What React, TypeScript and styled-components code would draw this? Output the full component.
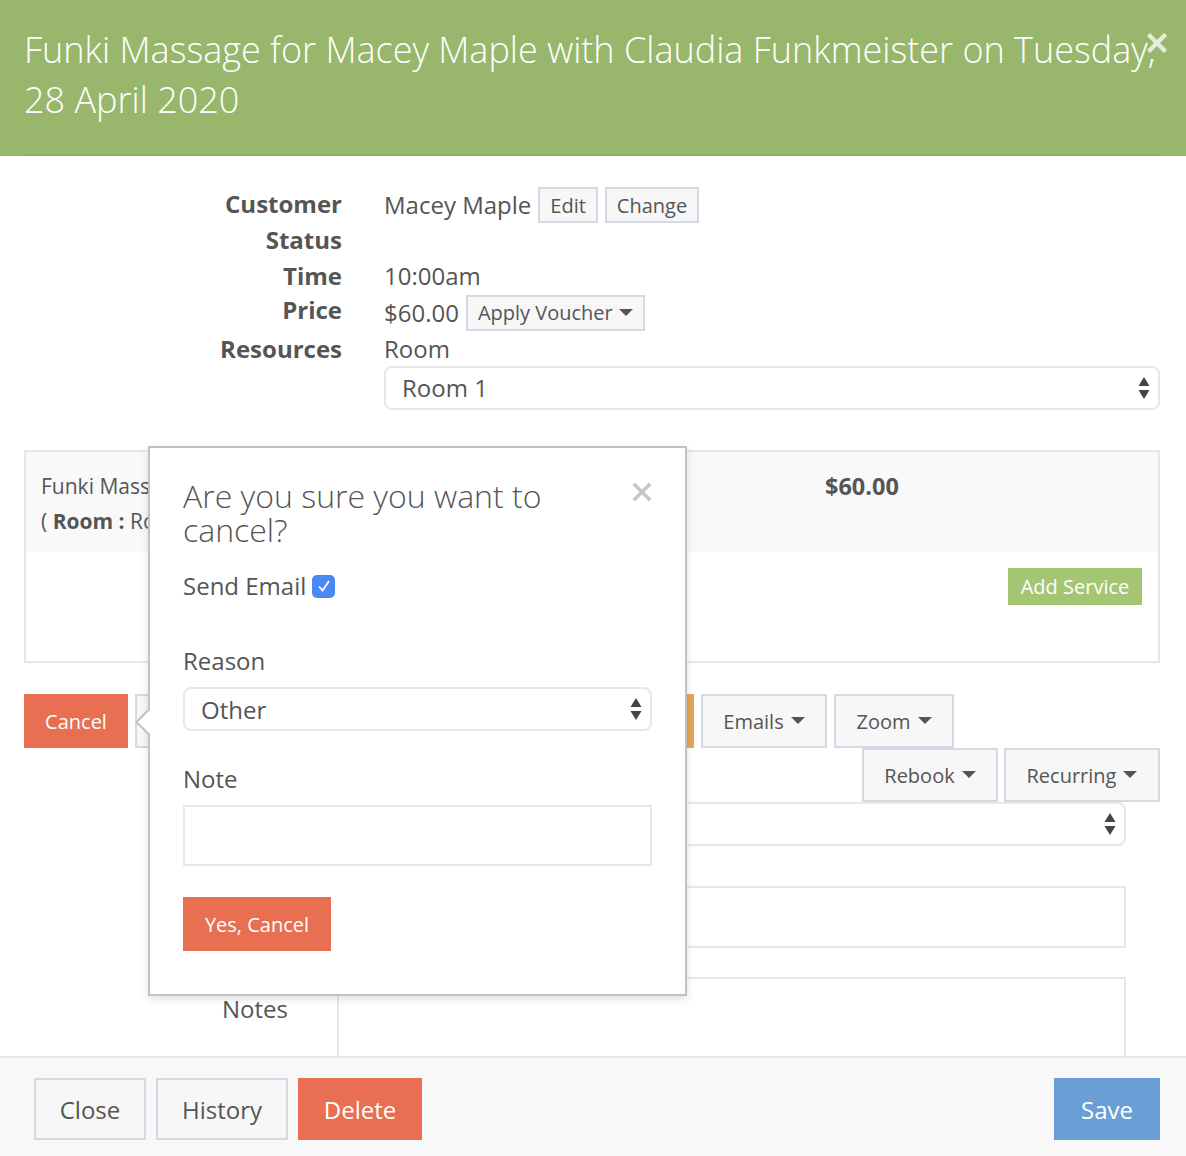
import React from "react";
import styled, { createGlobalStyle } from "styled-components";

const GlobalStyle = createGlobalStyle`
  html, body { margin: 0; padding: 0; background: #fff; }
  body { font-family: "Open Sans", "Noto Sans", sans-serif; color: #555; }
  * { box-sizing: border-box; }
`;

const Modal = styled.div`
  width: 1186px;
  height: 1156px;
  display: flex;
  flex-direction: column;
  overflow: hidden;
  position: relative;
`;

const Header = styled.header`
  position: relative;
  background: #98b76c;
  padding: 25px 26px 0 24px;
  flex: 0 0 156px;
`;

const Title = styled.h1`
  margin: 0;
  font-weight: 300;
  font-size: 36px;
  line-height: 50px;
  color: #fff;
  padding-bottom: 4px;
  border-bottom: 2px solid #8fae63;
  height: 131px;
`;

const HeaderClose = styled.button`
  position: absolute;
  top: 33px;
  right: 19px;
  width: 20px;
  height: 20px;
  padding: 0;
  border: 0;
  background: transparent;
  display: flex;
`;

const Body = styled.main`
  position: relative;
  flex: 1 1 auto;
  overflow: hidden;
  padding: 31px 26px 0 24px;
`;

const Details = styled.section`
  display: flex;
  flex-direction: column;
`;

const DetailRow = styled.div<{ $h: number }>`
  display: grid;
  grid-template-columns: 318px 1fr;
  column-gap: 42px;
  align-items: center;
  min-height: ${(p) => p.$h}px;
`;

const Label = styled.div`
  text-align: right;
  font-weight: 700;
  font-size: 24px;
  line-height: 34px;
  color: #555;
  align-self: start;
`;

const Value = styled.div`
  display: flex;
  align-items: center;
  gap: 7px;
  font-size: 24px;
  line-height: 34px;
  color: #555;
`;

const ValueStack = styled.div`
  display: flex;
  flex-direction: column;
  font-size: 24px;
  line-height: 34px;
  color: #555;
`;

const SmallBtn = styled.button`
  font-family: "Open Sans", sans-serif;
  font-size: 20px;
  color: #555;
  background: #f7f7f7;
  border: 2px solid #d3dae5;
  height: 36px;
  padding: 0 10px;
  display: inline-flex;
  align-items: center;
  gap: 6px;
`;

const SelectBox = styled.div<{ $w?: string }>`
  position: relative;
  height: 44px;
  width: ${(p) => p.$w || "100%"};
  border: 2px solid #e8e8e8;
  border-radius: 8px;
  background: #fff;
  display: flex;
  align-items: center;
  justify-content: space-between;
  padding: 0 8px 0 16px;
  font-size: 24px;
  color: #555;
`;

const ServiceBox = styled.section`
  margin-top: 40px;
  border: 2px solid #e6e6e6;
  height: 213px;
  display: flex;
  flex-direction: column;
`;

const ServiceRow = styled.div`
  background: #f9f9f9;
  height: 100px;
  display: grid;
  grid-template-columns: 784px 1fr;
  padding: 17px 15px 0;
  font-size: 21px;
  line-height: 35px;
  color: #555;
`;

const ServiceName = styled.div`
  display: flex;
  flex-direction: column;
`;

const ServicePrice = styled.div`
  font-weight: 700;
  font-size: 23.5px;
`;

const ServiceFoot = styled.div`
  display: flex;
  justify-content: flex-end;
  padding: 16px 16px 0;
`;

const Btn = styled.button<{ $variant?: "default" | "danger" | "warn" | "success" | "primary"; $h?: number; $fs?: number; $w?: number }>`
  font-family: "Open Sans", sans-serif;
  font-size: ${(p) => p.$fs || 20}px;
  height: ${(p) => p.$h || 54}px;
  ${(p) => (p.$w ? `width: ${p.$w}px;` : "")}
  padding: 0;
  display: inline-flex;
  align-items: center;
  justify-content: center;
  gap: 7px;
  border-radius: 0;
  white-space: nowrap;
  ${(p) => {
    switch (p.$variant) {
      case "danger":
        return "background:#e86f51;color:#fff;border:0;";
      case "warn":
        return "background:#e4a853;color:#fff;border:0;";
      case "success":
        return "background:#a4c572;color:#fff;border:0;";
      case "primary":
        return "background:#6a9fd6;color:#fff;border:0;";
      default:
        return "background:#f7f7f7;color:#555;border:2px solid #d3dae5;";
    }
  }}
`;

const Toolbar = styled.div`
  margin-top: 31px;
  display: flex;
  gap: 7px;
`;

const ToolbarRight = styled.div`
  display: flex;
  justify-content: flex-end;
  gap: 6px;
`;

const FormRows = styled.section`
  display: flex;
  flex-direction: column;
  padding-right: 34px;
`;

const FormRow = styled.div<{ $mt: number }>`
  display: grid;
  grid-template-columns: 264px 1fr;
  column-gap: 49px;
  margin-top: ${(p) => p.$mt}px;
`;

const FormLabel = styled.div`
  text-align: right;
  font-size: 24px;
  line-height: 34px;
  padding-top: 15px;
  color: #555;
`;

const TextBox = styled.div<{ $h: number }>`
  height: ${(p) => p.$h}px;
  border: 2px solid #e8e8e8;
  background: #fff;
`;

const Footer = styled.footer`
  flex: 0 0 100px;
  background: #f8f8f8;
  border-top: 2px solid #e9e9e9;
  padding: 20px 26px 0 34px;
  display: flex;
  justify-content: space-between;
  align-items: flex-start;
`;

const FooterGroup = styled.div`
  display: flex;
  gap: 10px;
`;

const Popover = styled.div`
  position: absolute;
  left: 148px;
  top: 290px;
  width: 539px;
  height: 550px;
  background: #fff;
  border: 2px solid #c2c2c2;
  box-shadow: 0 3px 8px rgba(0, 0, 0, 0.12);
  padding: 31px 33px 0 33px;
  display: flex;
  flex-direction: column;
  z-index: 5;

  &::before,
  &::after {
    content: "";
    position: absolute;
    top: 50%;
    width: 0;
    height: 0;
    border-style: solid;
    border-color: transparent;
  }
  &::before {
    left: -15px;
    margin-top: 1px;
    transform: translateY(-50%);
    border-width: 14px 14px 14px 0;
    border-right-color: #c2c2c2;
  }
  &::after {
    left: -12px;
    margin-top: 1px;
    transform: translateY(-50%);
    border-width: 13px 13px 13px 0;
    border-right-color: #fff;
  }
`;

const PopTitle = styled.h3`
  margin: 0;
  font-weight: 300;
  font-size: 32px;
  line-height: 34px;
  color: #555;
  padding-right: 90px;
`;

const PopClose = styled.button`
  position: absolute;
  top: 34px;
  right: 33px;
  width: 20px;
  height: 20px;
  padding: 0;
  border: 0;
  background: transparent;
  display: flex;
`;

const CheckRow = styled.label`
  margin-top: 22px;
  display: flex;
  align-items: center;
  gap: 6px;
  font-size: 24px;
  line-height: 34px;
  color: #555;
`;

const CheckBox = styled.span`
  width: 23px;
  height: 23px;
  border-radius: 5px;
  background: #4a89f3;
  display: inline-flex;
  align-items: center;
  justify-content: center;
`;

const PopLabel = styled.div<{ $mt: number }>`
  margin-top: ${(p) => p.$mt}px;
  margin-bottom: 9px;
  font-size: 24px;
  line-height: 34px;
  color: #555;
`;

const PopActions = styled.div`
  margin-top: 31px;
  display: flex;
`;

const Caret = () => (
  <svg width="14" height="8" viewBox="0 0 14 8">
    <path d="M0 0 H14 L7 7 Z" fill="#555" />
  </svg>
);

const Updown = () => (
  <svg width="12" height="24" viewBox="0 0 12 24">
    <path d="M6 1 L11.5 10 H0.5 Z" fill="#444" />
    <path d="M0.5 14 H11.5 L6 23 Z" fill="#444" />
  </svg>
);

const XIcon = ({ color, w }: { color: string; w: number }) => (
  <svg width="20" height="20" viewBox="0 0 20 20">
    <path d="M3 3 L17 17 M17 3 L3 17" stroke={color} strokeWidth={w} strokeLinecap="square" />
  </svg>
);

export default function App() {
  return (
    <>
      <GlobalStyle />
      <Modal>
        <Header>
          <Title>Funki Massage for Macey Maple with Claudia Funkmeister on Tuesday, 28 April 2020</Title>
          <HeaderClose aria-label="Close">
            <XIcon color="#e6ecdd" w={4.4} />
          </HeaderClose>
        </Header>

        <Body>
          <Details>
            <DetailRow $h={36}>
              <Label>Customer</Label>
              <Value>
                Macey Maple
                <SmallBtn>Edit</SmallBtn>
                <SmallBtn>Change</SmallBtn>
              </Value>
            </DetailRow>
            <DetailRow $h={36}>
              <Label>Status</Label>
              <Value />
            </DetailRow>
            <DetailRow $h={34}>
              <Label>Time</Label>
              <Value>10:00am</Value>
            </DetailRow>
            <DetailRow $h={39}>
              <Label>Price</Label>
              <Value>
                $60.00
                <SmallBtn>
                  Apply Voucher <Caret />
                </SmallBtn>
              </Value>
            </DetailRow>
            <DetailRow $h={78}>
              <Label>Resources</Label>
              <ValueStack>
                Room
                <SelectBox>
                  Room 1
                  <Updown />
                </SelectBox>
              </ValueStack>
            </DetailRow>
          </Details>

          <ServiceBox>
            <ServiceRow>
              <ServiceName>
                <span>Funki Massage (60 min)</span>
                <span>
                  ( <b>Room :</b> Room 1 )
                </span>
              </ServiceName>
              <ServicePrice>$60.00</ServicePrice>
            </ServiceRow>
            <ServiceFoot>
              <Btn $variant="success" $h={37} $w={134}>
                Add Service
              </Btn>
            </ServiceFoot>
          </ServiceBox>

          <Toolbar>
            <Btn $variant="danger" $w={104}>Cancel</Btn>
            <Btn $w={164}>No Show</Btn>
            <Btn $variant="warn" $w={388}>Check In</Btn>
            <Btn $w={126}>
              Emails <Caret />
            </Btn>
            <Btn $w={120}>
              Zoom <Caret />
            </Btn>
          </Toolbar>
          <ToolbarRight>
            <Btn $w={136}>
              Rebook <Caret />
            </Btn>
            <Btn $w={156}>
              Recurring <Caret />
            </Btn>
          </ToolbarRight>

          <FormRows>
            <FormRow $mt={0}>
              <FormLabel>Status</FormLabel>
              <SelectBox>
                <span />
                <Updown />
              </SelectBox>
            </FormRow>
            <FormRow $mt={35}>
              <FormLabel>Reference</FormLabel>
              <TextBox $h={62} />
            </FormRow>
            <FormRow $mt={29}>
              <FormLabel>Notes</FormLabel>
              <TextBox $h={120} />
            </FormRow>
          </FormRows>

          <Popover role="dialog">
            <PopTitle>Are you sure you want to cancel?</PopTitle>
            <PopClose aria-label="Close">
              <XIcon color="#c6c6c6" w={3.6} />
            </PopClose>
            <CheckRow>
              Send Email
              <CheckBox>
                <svg width="16" height="16" viewBox="0 0 16 16">
                  <path d="M3 8.5 L6.5 12.5 L13 3" stroke="#fff" strokeWidth="1.8" fill="none" />
                </svg>
              </CheckBox>
            </CheckRow>
            <PopLabel $mt={41}>Reason</PopLabel>
            <SelectBox>
              Other
              <Updown />
            </SelectBox>
            <PopLabel $mt={31}>Note</PopLabel>
            <TextBox $h={61} />
            <PopActions>
              <Btn $variant="danger" $w={148}>Yes, Cancel</Btn>
            </PopActions>
          </Popover>
        </Body>

        <Footer>
          <FooterGroup>
            <Btn $h={62} $fs={24} $w={112}>Close</Btn>
            <Btn $h={62} $fs={24} $w={132}>History</Btn>
            <Btn $variant="danger" $h={62} $fs={24} $w={124}>Delete</Btn>
          </FooterGroup>
          <Btn $variant="primary" $h={62} $fs={24} $w={106}>Save</Btn>
        </Footer>
      </Modal>
    </>
  );
}
